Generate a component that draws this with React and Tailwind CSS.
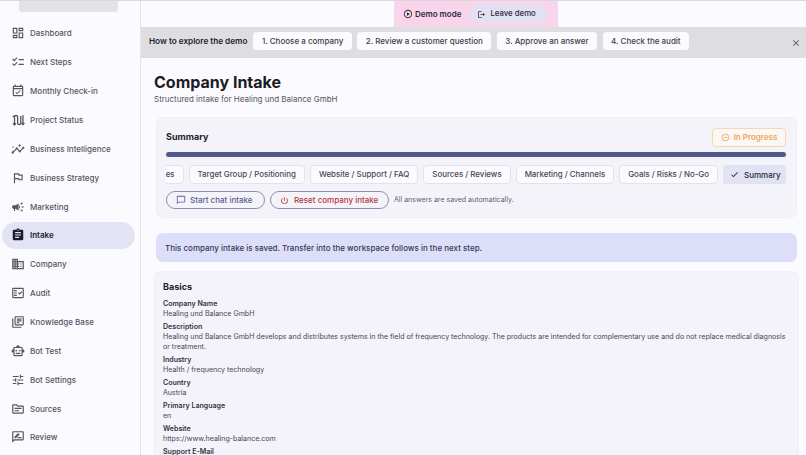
import {
  MdOutlineDashboard,
  MdOutlineChecklist,
  MdOutlineEventAvailable,
  MdOutlineInsights,
  MdOutlineAssistantPhoto,
  MdCampaign,
  MdAssignment,
  MdBusiness,
  MdOutlineFactCheck,
  MdOutlineLibraryBooks,
  MdOutlineSmartToy,
  MdOutlineTune,
  MdOutlineSource,
  MdOutlineRateReview,
  MdOutlinePlayCircle,
  MdOutlineLogout,
  MdClose,
  MdCheck,
  MdOutlineChatBubbleOutline,
  MdOutlinePowerSettingsNew,
  MdOutlineDoNotDisturbOn,
} from "react-icons/md";

function RouteIcon({ className }) {
  return (
    <svg viewBox="0 0 24 24" fill="none" stroke="currentColor" strokeWidth="2.2" className={className}>
      <path d="M6 20V7a2.7 2.7 0 0 1 5.4 0v10a2.7 2.7 0 0 0 5.4 0V5" />
      <path d="M3.5 17.5L6 20.5l2.5-3" />
      <path d="M20.5 4v15.5M18 17l2.5 3 2.5-3" />
      <path d="M3 7l3-3" />
    </svg>
  );
}

const navItems = [
  ["Dashboard", MdOutlineDashboard],
  ["Next Steps", MdOutlineChecklist],
  ["Monthly Check-in", MdOutlineEventAvailable],
  ["Project Status", RouteIcon],
  ["Business Intelligence", MdOutlineInsights],
  ["Business Strategy", MdOutlineAssistantPhoto],
  ["Marketing", MdCampaign],
  ["Intake", MdAssignment, true],
  ["Company", MdBusiness],
  ["Audit", MdOutlineFactCheck],
  ["Knowledge Base", MdOutlineLibraryBooks],
  ["Bot Test", MdOutlineSmartToy],
  ["Bot Settings", MdOutlineTune],
  ["Sources", MdOutlineSource],
  ["Review", MdOutlineRateReview],
];

const demoSteps = ["1. Choose a company", "2. Review a customer question", "3. Approve an answer", "4. Check the audit"];

const tabs = ["Products / Services", "Target Group / Positioning", "Website / Support / FAQ", "Sources / Reviews", "Marketing / Channels", "Goals / Risks / No-Go"];

const fields = [
  ["Company Name", "Healing und Balance GmbH"],
  ["Description", "Healing und Balance GmbH develops and distributes systems in the field of frequency technology. The products are intended for complementary use and do not replace medical diagnosis or treatment."],
  ["Industry", "Health / frequency technology"],
  ["Country", "Austria"],
  ["Primary Language", "en"],
  ["Website", "https://www.healing-balance.com"],
];

function Sidebar() {
  return (
    <aside className="w-[141px] shrink-0 h-full border-r border-[#e4e3ea] overflow-hidden">
      <div className="ml-[19px] w-[99px] h-[11px] rounded-b-[3px] bg-[#e3e3e6]" />
      <nav className="flex flex-col mt-[7px] pl-[2px] pr-[5px]">
        {navItems.map(([label, Icon, active]) => (
          <div key={label} className="h-[28.86px] shrink-0 flex items-center">
            <div
              className={`flex items-center w-full h-[27px] pl-[9px] gap-[5px] rounded-full text-[8px] ${active ? "bg-[#e2e3f5] text-[#1b1c2e] font-semibold" : "text-[#55565f] font-medium"}`}
            >
              <Icon className="w-[14px] h-[14px] shrink-0" />
              <span>{label}</span>
            </div>
          </div>
        ))}
      </nav>
    </aside>
  );
}

function DemoBar() {
  return (
    <>
      <div className="h-[26px] shrink-0 flex">
        <div className="ml-[253px] w-[164px] h-full bg-[#f8d5ea] flex items-center pl-[9px] text-[8px] font-semibold text-[#2c2c3a]">
          <MdOutlinePlayCircle className="w-[10px] h-[10px] mr-[2px]" />
          <span>Demo mode</span>
          <div className="ml-[8px] h-[18px] w-[78px] rounded-full bg-[#e2e0f2] flex items-center pl-[8px] gap-[4px] font-medium text-[7.8px]">
            <MdOutlineLogout className="w-[9px] h-[9px]" />
            <span>Leave demo</span>
          </div>
        </div>
      </div>
      <div className="h-[31px] shrink-0 bg-[#dedee2] flex items-start pt-[5px] pl-[8px] pr-[5px] text-[8px]">
        <span className="font-semibold text-[8.2px] text-[#24242c] mr-[6px] leading-[18px]">How to explore the demo</span>
        <div className="flex gap-[5.5px]">
          {demoSteps.map((s) => (
            <div key={s} className="h-[18px] px-[8.5px] bg-[#fbfaff] rounded-[4px] flex items-center font-medium text-[#3e3e48] whitespace-nowrap">
              {s}
            </div>
          ))}
        </div>
        <MdClose className="ml-auto mt-[6px] w-[10px] h-[10px] text-[#55555f]" />
      </div>
    </>
  );
}

function SummaryCard() {
  return (
    <section className="mt-[12px] mr-[9px] ml-[2px] h-[101px] rounded-[7px] border border-[#efeef4] bg-[#f5f3fa] pl-[9px] pr-[10px] pt-[9px]">
      <div className="flex items-center justify-between h-[20px]">
        <h2 className="text-[9px] font-bold text-[#22222c]">Summary</h2>
        <div className="h-[19px] w-[74px] border border-[#f6d7ae] rounded-[4px] bg-[#fbf7f4] flex items-center justify-center gap-[4px] text-[8px] font-semibold text-[#eda760]">
          <MdOutlineDoNotDisturbOn className="w-[9px] h-[9px]" />
          <span>In Progress</span>
        </div>
      </div>
      <div className="mt-[5px] h-[5px] rounded-full bg-[#525a8c]" />
      <div className="mt-[8px] h-[19px] flex justify-end gap-[5px] overflow-hidden text-[7.9px] font-medium text-[#474852]">
        {tabs.map((t) => (
          <div key={t} className="h-full shrink-0 px-[8px] rounded-[4px] border border-[#e3e2e9] bg-[#fbfaff] flex items-center whitespace-nowrap">
            {t}
          </div>
        ))}
        <div className="h-full shrink-0 w-[63px] pl-[7px] rounded-[3px] bg-[#e1e2f4] flex items-center gap-[5px] text-[8px] text-[#272838] whitespace-nowrap">
          <MdCheck className="w-[9px] h-[9px]" />
          <span>Summary</span>
        </div>
      </div>
      <div className="mt-[7px] flex items-center text-[8px] font-medium">
        <div className="h-[18px] w-[99px] rounded-full border border-[#8e90ab] text-[#565e8f] flex items-center pl-[9px] gap-[4px]">
          <MdOutlineChatBubbleOutline className="w-[10px] h-[10px]" />
          <span>Start chat intake</span>
        </div>
        <div className="ml-[5px] h-[18px] w-[119px] rounded-full border border-[#8e90ab] text-[#b6373f] flex items-center pl-[9px] gap-[5px] whitespace-nowrap">
          <MdOutlinePowerSettingsNew className="w-[9px] h-[9px]" />
          <span>Reset company intake</span>
        </div>
        <span className="ml-[5px] text-[7px] font-normal text-[#5e5f68]">All answers are saved automatically.</span>
      </div>
    </section>
  );
}

export default function App() {
  return (
    <div className="h-screen w-full flex overflow-hidden bg-[#fbfaff] font-['Inter',sans-serif] border-t border-[#d9d8de]">
      <Sidebar />
      <main className="flex-1 min-w-0 flex flex-col overflow-hidden">
        <DemoBar />
        <div className="flex-1 overflow-hidden pl-[13px]">
          <h1 className="mt-[14px] text-[16px] leading-[20px] font-bold text-[#1c1c24]">Company Intake</h1>
          <p className="mt-[2px] text-[8px] leading-[11px] text-[#55565f]">Structured intake for Healing und Balance GmbH</p>
          <SummaryCard />
          <div className="mt-[15px] mr-[9px] ml-[2px] h-[29px] rounded-[7px] bg-[#dddffa] flex items-center pl-[9px] text-[8px] font-medium text-[#363752]">
            This company intake is saved. Transfer into the workspace follows in the next step.
          </div>
          <section className="mt-[9px] mr-[7px] rounded-[7px] border border-[#f0eff5] bg-[#f4f2fa] pl-[8px] pr-[8px] pt-[8px] pb-[12px]">
            <h2 className="text-[9px] leading-[14px] font-bold text-[#22222c] mb-[5px]">Basics</h2>
            <div className="flex flex-col gap-[3px]">
              {fields.map(([label, value]) => (
                <div key={label}>
                  <div className="text-[7.05px] leading-[10px] font-semibold text-[#33333d]">{label}</div>
                  <div className="text-[7.05px] leading-[10px] text-[#474852]">{value}</div>
                </div>
              ))}
              <div className="text-[7.05px] leading-[10px] font-semibold text-[#33333d]">Support E-Mail</div>
            </div>
          </section>
        </div>
      </main>
    </div>
  );
}
